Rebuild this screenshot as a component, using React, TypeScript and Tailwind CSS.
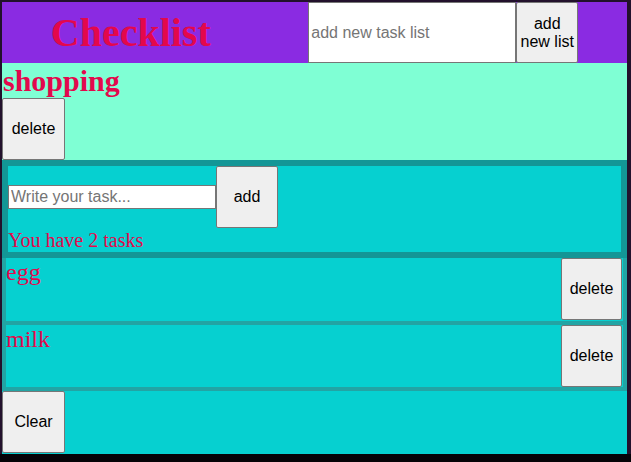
import React from "react";

const tasks = ["egg", "milk"];

const btn =
  "rounded-[2px] border border-[#767676] bg-[#efefef] text-[16px] leading-[18px] text-black font-['Liberation_Sans',Arial,sans-serif]";

function TaskRow({ name }: { name: string }) {
  return (
    <li className="flex items-start justify-between border-x-4 border-b-4 border-[#22a4a4] bg-[#06d0d0] pr-px first:pb-px">
      <span className="font-['Liberation_Serif',serif] text-[24px] leading-[28px] text-[#e3084c]">{name}</span>
      <button className={`${btn} h-[62px] w-[61px]`}>delete</button>
    </li>
  );
}

export default function App() {
  return (
    <div className="h-[462px] w-[631px] bg-[#050307]">
      <div className="flex h-[454px] flex-col bg-[#22112c] pl-[2px] pr-[4px] pt-[2px]">
        <header className="flex items-center justify-around bg-[#8a2be2]">
          <h1 className="font-['Liberation_Serif',serif] text-[40px] font-bold leading-[46px] text-[#e3084c]">Checklist</h1>
          <div className="flex">
            <input
              placeholder="add new task list"
              className="h-[61px] w-[208px] border border-[#767676] bg-white px-[2px] font-['Liberation_Sans',Arial,sans-serif] text-[16px] placeholder:text-[#757575]"
            />
            <button className={`${btn} h-[61px] w-[62px]`}>add new list</button>
          </div>
        </header>

        <section className="bg-[#7fffd4]">
          <h2 className="pl-px font-['Liberation_Serif',serif] text-[30px] font-bold leading-[35px] text-[#e3084c]">shopping</h2>
          <button className={`${btn} h-[62px] w-[63px]`}>delete</button>
        </section>

        <section className="flex-1 bg-[#06d0d0]">
          <div className="border-[6px] border-[#139696] bg-[#06d0d0]">
            <div className="flex items-center">
              <input
                placeholder="Write your task..."
                className="h-[24px] w-[208px] border border-[#767676] bg-white px-[2px] font-['Liberation_Sans',Arial,sans-serif] text-[16px] placeholder:text-[#757575]"
              />
              <button className={`${btn} h-[62px] w-[62px]`}>add</button>
            </div>
            <p className="font-['Liberation_Serif',serif] text-[20px] leading-[24px] text-[#e3084c]">
              You have {tasks.length} tasks
            </p>
          </div>
          <ul>
            {tasks.map((t) => (
              <TaskRow key={t} name={t} />
            ))}
          </ul>
          <button className={`${btn} h-[62px] w-[63px]`}>Clear</button>
        </section>
      </div>
    </div>
  );
}
